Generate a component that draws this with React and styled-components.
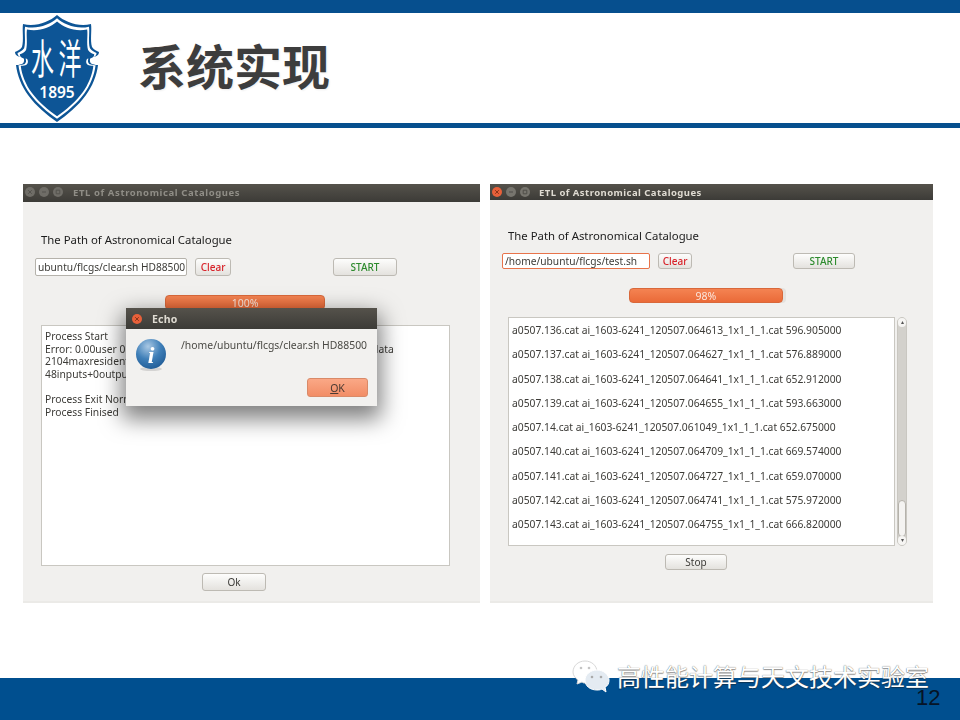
import React from 'react'
import styled, { createGlobalStyle } from 'styled-components'

const GlobalStyle = createGlobalStyle`
  html, body { margin: 0; padding: 0; background: #fff; }
  * { box-sizing: border-box; }
`

const uiFont = `"Noto Sans", "Open Sans", sans-serif`
const cjkFont = `"Noto Sans CJK SC", sans-serif`

const Slide = styled.div`
  position: relative;
  width: 960px;
  height: 720px;
  overflow: hidden;
  display: flex;
  flex-direction: column;
  background: #fff;
`
const TopBar = styled.div`
  height: 13px;
  background: #064f8e;
`
const Header = styled.header`
  height: 110px;
  display: flex;
  align-items: flex-start;
  padding-left: 14px;
`
const HeaderRule = styled.div`
  height: 5px;
  background: #064f8e;
`
const Title = styled.h1`
  margin: 21px 0 0 38px;
  font: 700 48px/60px ${cjkFont};
  color: #3d3d3d;
  text-shadow: 1px 1px 2px rgba(0, 0, 0, 0.08);
`
const Stage = styled.main`
  flex: 1;
  display: flex;
  gap: 10px;
  padding: 56px 0 0 23px;
`
const Footer = styled.footer`
  height: 42px;
  background: #004f8f;
`
const Watermark = styled.div`
  position: absolute;
  left: 572px;
  top: 660px;
  display: flex;
  align-items: flex-start;
  gap: 7px;
  font: 400 24px/32px ${cjkFont};
  color: #fff;
  text-shadow: 0 0 1px #555, 0 1px 1px rgba(0, 0, 0, 0.4);
  white-space: nowrap;
`
const PageNumber = styled.div`
  position: absolute;
  left: 916px;
  top: 686px;
  font: 400 22px/24px "Liberation Sans", sans-serif;
  color: #061426;
`

const Window = styled.section`
  position: relative;
  width: ${(p) => p.$width}px;
  height: 419px;
  background: #f1f0ee;
  border-bottom: 2px solid #ebeae7;
  font-family: ${uiFont};
  filter: blur(0.3px);
`
const TitleBar = styled.div`
  height: ${(p) => p.$height}px;
  display: flex;
  align-items: center;
  padding: 0 0 ${(p) => p.$lift || 0}px ${(p) => p.$pad}px;
  background: linear-gradient(#55524b, #3c3b37);
  color: ${(p) => (p.$active ? '#dfdbd2' : '#8f8d86')};
  font-size: ${(p) => p.$size || 9.5}px;
  font-weight: 700;
  letter-spacing: ${(p) => p.$spacing}px;
`
const Dots = styled.div`
  display: flex;
  gap: 4px;
  margin-right: ${(p) => p.$after}px;
`
const Dot = styled.svg`
  width: 10px;
  height: 10px;
`
const Label = styled.div`
  margin: ${(p) => p.$top}px 0 0 18px;
  height: 16px;
  font-size: 11.35px;
  line-height: 16px;
  color: #1c1c1c;
`
const Controls = styled.div`
  display: flex;
  margin: ${(p) => p.$top}px 0 0 12px;
  height: ${(p) => p.$height}px;
`
const PathInput = styled.div`
  width: ${(p) => p.$width}px;
  height: 100%;
  margin-right: 8px;
  padding: 0 1px 0 2px;
  overflow: hidden;
  white-space: nowrap;
  background: #fff;
  border: 1px solid ${(p) => (p.$focus ? '#e8734a' : '#b5b2ab')};
  border-radius: 2px;
  font-size: 10.2px;
  line-height: ${(p) => p.$line}px;
  color: #3c3b37;
`
const Button = styled.div`
  display: flex;
  align-items: center;
  justify-content: center;
  width: ${(p) => p.$width}px;
  height: ${(p) => p.$height || 18}px;
  margin-left: ${(p) => p.$left || 0}px;
  border: 1px solid #bdbab3;
  border-radius: 3px;
  background: linear-gradient(#fdfdfc, #e4e2de);
  font-size: 10px;
  font-weight: ${(p) => (p.$color ? 500 : 400)};
  color: ${(p) => p.$color || '#3c3b37'};
`
const ProgressTrack = styled.div`
  width: ${(p) => p.$width}px;
  height: 15px;
  margin: ${(p) => p.$top}px 0 0 ${(p) => p.$left}px;
  border-radius: 4px;
  background: #e4e2de;
`
const ProgressFill = styled.div`
  display: flex;
  align-items: center;
  justify-content: center;
  height: 100%;
  border-radius: 4px;
  border: 1px solid #d9683a;
  background: linear-gradient(#f48352, #ea6a38);
  font-size: 10.5px;
  color: #fbe6dc;
`
const ListRow = styled.div`
  display: flex;
  gap: 2px;
  margin: ${(p) => p.$top}px 0 0 18px;
  height: ${(p) => p.$height}px;
`
const ListBox = styled.div`
  width: ${(p) => p.$width}px;
  height: 100%;
  padding: ${(p) => p.$pad};
  background: #fff;
  border: 1px solid #c9c7c1;
  font-size: 10.3px;
  color: #3c3b37;
  overflow: hidden;
`
const LogLine = styled.div`
  height: 12.7px;
  line-height: 12.7px;
  white-space: nowrap;
`
const CatLine = styled.div`
  height: 24.25px;
  line-height: 24.25px;
  white-space: nowrap;
`
const Scrollbar = styled.div`
  position: relative;
  width: 10px;
  height: 100%;
  border: 1px solid #c9c7c1;
  border-radius: 5px;
  background: #d3d1cc;
`
const ScrollThumb = styled.div`
  position: absolute;
  left: 0;
  right: 0;
  bottom: 8px;
  height: 37px;
  border: 1px solid #b5b2ab;
  border-radius: 5px;
  background: #f4f3f1;
  &::after {
    content: '';
    position: absolute;
    left: 3px;
    right: 3px;
    top: 14px;
    height: 7px;
    background: repeating-linear-gradient(#b9b7b1 0 1px, transparent 1px 3px);
  }
`
const ScrollCap = styled.div`
  position: absolute;
  left: 0;
  right: 0;
  ${(p) => (p.$end ? 'bottom: 0;' : 'top: 0;')}
  height: 9px;
  border-radius: 5px;
  background: #f6f5f3;
  font-size: 6px;
  line-height: 9px;
  text-align: center;
  color: #555;
`
const Dialog = styled.div`
  position: absolute;
  left: 103px;
  top: 124px;
  width: 251px;
  height: 98px;
  background: #f2f1ef;
  border-radius: 4px 4px 0 0;
  box-shadow: 0 9px 22px 4px rgba(0, 0, 0, 0.5);
`
const DialogBody = styled.div`
  display: flex;
  height: 77px;
  padding: 9px 0 0 9px;
`
const DialogText = styled.div`
  margin: 0 0 0 14px;
  font-size: 10.4px;
  line-height: 14px;
  color: #4a4944;
`
const OkButton = styled.div`
  position: absolute;
  left: 181px;
  top: 70px;
  display: flex;
  align-items: center;
  justify-content: center;
  width: 61px;
  height: 19px;
  border: 1px solid #d98a68;
  border-radius: 3px;
  background: linear-gradient(#faa886, #f28d66);
  font-size: 10.5px;
  color: #4a3a32;
  & u { text-underline-offset: 1px; }
`

const glyphs = {
  close: 'M3.2 3.2L6.8 6.8M6.8 3.2L3.2 6.8',
  min: 'M3 5H7',
  max: 'M3.2 3.2H6.8V6.8H3.2Z',
}

function WinDot({ kind, color, mark }) {
  return (
    <Dot viewBox="0 0 10 10">
      <circle cx="5" cy="5" r="5" fill={color} />
      <path d={glyphs[kind]} fill="none" stroke={mark} strokeWidth="1" />
    </Dot>
  )
}

function Logo() {
  const shield =
    'M43 2C35 9 22 14 9 11C8 17 10 27 8 34C6 37 3 38 1 39C1 43 5 44 9 44C11 47 10 50 8 51C5 52 3 52 2 52C3 62 8 74 14 82C22 93 33 102 43 109C53 102 64 93 72 82C78 74 83 62 84 52C83 52 81 52 78 51C76 50 75 47 77 44C81 44 85 43 85 39C83 38 80 37 78 34C76 27 78 17 77 11C64 14 51 9 43 2Z'
  return (
    <svg width="86" height="111" viewBox="0 0 86 111">
      <path d={shield} fill="#0d5596" />
      <path d={shield} fill="#fff" transform="translate(2.6 3.4) scale(0.94)" />
      <path d={shield} fill="#0d5596" transform="translate(5 6.8) scale(0.885)" />
      <text transform="translate(28.5 61) scale(0.85 1.5)" textAnchor="middle" fontFamily={cjkFont} fontSize="27" fill="#fff">水</text>
      <text transform="translate(56 61) scale(0.85 1.5)" textAnchor="middle" fontFamily={cjkFont} fontSize="27" fill="#fff">洋</text>
      <text x="43" y="85" textAnchor="middle" fontFamily={uiFont} fontSize="15.5" fontWeight="600" fill="#fff">1895</text>
    </svg>
  )
}

function InfoIcon() {
  return (
    <svg width="32" height="34" viewBox="0 0 32 34">
      <defs>
        <radialGradient id="infoBall" cx="0.4" cy="0.25" r="0.85">
          <stop offset="0" stopColor="#a9c8e4" />
          <stop offset="0.5" stopColor="#3f7fb8" />
          <stop offset="1" stopColor="#1b5690" />
        </radialGradient>
      </defs>
      <ellipse cx="16" cy="31" rx="11" ry="2" fill="#000" opacity="0.12" />
      <circle cx="16" cy="16" r="15" fill="url(#infoBall)" />
      <text x="16" y="25" textAnchor="middle" fontFamily="'Liberation Serif', serif" fontStyle="italic" fontWeight="700" fontSize="24" fill="#fff">i</text>
    </svg>
  )
}

function WeChatMark() {
  return (
    <svg width="38" height="34" viewBox="0 0 38 34">
      <path d="M13 1C6 1 1 6 1 12C1 15 3 18 6 20L5 24L10 22C11 23 12 23 13 23C20 23 25 18 25 12C25 6 20 1 13 1Z" fill="#fff" stroke="#d8d8d8" strokeWidth="1" />
      <path d="M25 10C18 10 13 15 13 20C13 26 18 30 25 30C27 30 28 30 30 29L34 32L33 27C36 26 37 23 37 20C37 15 32 10 25 10Z" fill="#e4ebf2" stroke="#fff" strokeWidth="1" />
      <circle cx="20" cy="17" r="1.3" fill="#aaa" />
      <circle cx="29" cy="17" r="1.3" fill="#aaa" />
      <circle cx="9" cy="8" r="1.3" fill="#c4c4c4" />
      <circle cx="17" cy="8" r="1.3" fill="#c4c4c4" />
    </svg>
  )
}

const catLines = [
  'a0507.136.cat ai_1603-6241_120507.064613_1x1_1_1.cat 596.905000',
  'a0507.137.cat ai_1603-6241_120507.064627_1x1_1_1.cat 576.889000',
  'a0507.138.cat ai_1603-6241_120507.064641_1x1_1_1.cat 652.912000',
  'a0507.139.cat ai_1603-6241_120507.064655_1x1_1_1.cat 593.663000',
  'a0507.14.cat ai_1603-6241_120507.061049_1x1_1_1.cat 652.675000',
  'a0507.140.cat ai_1603-6241_120507.064709_1x1_1_1.cat 669.574000',
  'a0507.141.cat ai_1603-6241_120507.064727_1x1_1_1.cat 659.070000',
  'a0507.142.cat ai_1603-6241_120507.064741_1x1_1_1.cat 575.972000',
  'a0507.143.cat ai_1603-6241_120507.064755_1x1_1_1.cat 666.820000',
]

const logLines = [
  'Process Start',
  'Error: 0.00user 0.00system 0:00.00elapsed 100%CPU 0avgtext+0avgdata',
  '2104maxresident',
  '48inputs+0outputs',
  '\u00a0',
  'Process Exit Normally',
  'Process Finised',
]

export default function App() {
  return (
    <Slide>
      <GlobalStyle />
      <TopBar />
      <Header>
        <Logo />
        <Title>系统实现</Title>
      </Header>
      <HeaderRule />
      <Stage>
        <Window $width={457}>
          <TitleBar $height={18} $pad={2} $lift={2} $spacing={0.6}>
            <Dots $after={10}>
              <WinDot kind="close" color="#6f6d67" mark="#55534e" />
              <WinDot kind="min" color="#6f6d67" mark="#55534e" />
              <WinDot kind="max" color="#6f6d67" mark="#55534e" />
            </Dots>
            ETL of Astronomical Catalogues
          </TitleBar>
          <Label $top={30}>The Path of Astronomical Catalogue</Label>
          <Controls $top={10} $height={18}>
            <PathInput $width={152} $line={16}>ubuntu/flcgs/clear.sh HD88500</PathInput>
            <Button $width={36} $color="#d8232a">Clear</Button>
            <Button $width={64} $left={102} $color="#2e8b2e">START</Button>
          </Controls>
          <ProgressTrack $width={160} $top={19} $left={142}>
            <ProgressFill style={{ width: '100%' }}>100%</ProgressFill>
          </ProgressTrack>
          <ListRow $top={15} $height={241}>
            <ListBox $width={409} $pad="4px 0 0 3px">
              {logLines.map((line, i) => (
                <LogLine key={i}>{line}</LogLine>
              ))}
            </ListBox>
          </ListRow>
          <Controls $top={7} $height={18}>
            <Button $width={64} $left={167}>Ok</Button>
          </Controls>
          <Dialog>
            <TitleBar $height={21} $pad={6} $spacing={0.2} $size={10.5} $active>
              <Dots $after={10}>
                <WinDot kind="close" color="#e8603a" mark="#8a3418" />
              </Dots>
              Echo
            </TitleBar>
            <DialogBody>
              <InfoIcon />
              <DialogText>/home/ubuntu/flcgs/clear.sh HD88500</DialogText>
            </DialogBody>
            <OkButton><span><u>O</u>K</span></OkButton>
          </Dialog>
        </Window>
        <Window $width={443}>
          <TitleBar $height={16} $pad={2} $spacing={0.45} $active>
            <Dots $after={9}>
              <WinDot kind="close" color="#e8603a" mark="#8a3418" />
              <WinDot kind="min" color="#77756e" mark="#4f4d48" />
              <WinDot kind="max" color="#77756e" mark="#4f4d48" />
            </Dots>
            ETL of Astronomical Catalogues
          </TitleBar>
          <Label $top={28}>The Path of Astronomical Catalogue</Label>
          <Controls $top={9} $height={16}>
            <PathInput $width={148} $line={14} $focus>/home/ubuntu/flcgs/test.sh</PathInput>
            <Button $width={34} $height={16} $color="#d8232a">Clear</Button>
            <Button $width={62} $height={16} $left={101} $color="#2e8b2e">START</Button>
          </Controls>
          <ProgressTrack $width={157} $top={19} $left={139}>
            <ProgressFill style={{ width: '98%' }}>98%</ProgressFill>
          </ProgressTrack>
          <ListRow $top={14} $height={229}>
            <ListBox $width={387} $pad="0 0 0 3px">
              {catLines.map((line) => (
                <CatLine key={line}>{line}</CatLine>
              ))}
            </ListBox>
            <Scrollbar>
              <ScrollCap>▴</ScrollCap>
              <ScrollThumb />
              <ScrollCap $end>▾</ScrollCap>
            </Scrollbar>
          </ListRow>
          <Controls $top={8} $height={16}>
            <Button $width={62} $height={16} $left={163}>Stop</Button>
          </Controls>
        </Window>
      </Stage>
      <Footer />
      <Watermark>
        <WeChatMark />
        高性能计算与天文技术实验室
      </Watermark>
      <PageNumber>12</PageNumber>
    </Slide>
  )
}
